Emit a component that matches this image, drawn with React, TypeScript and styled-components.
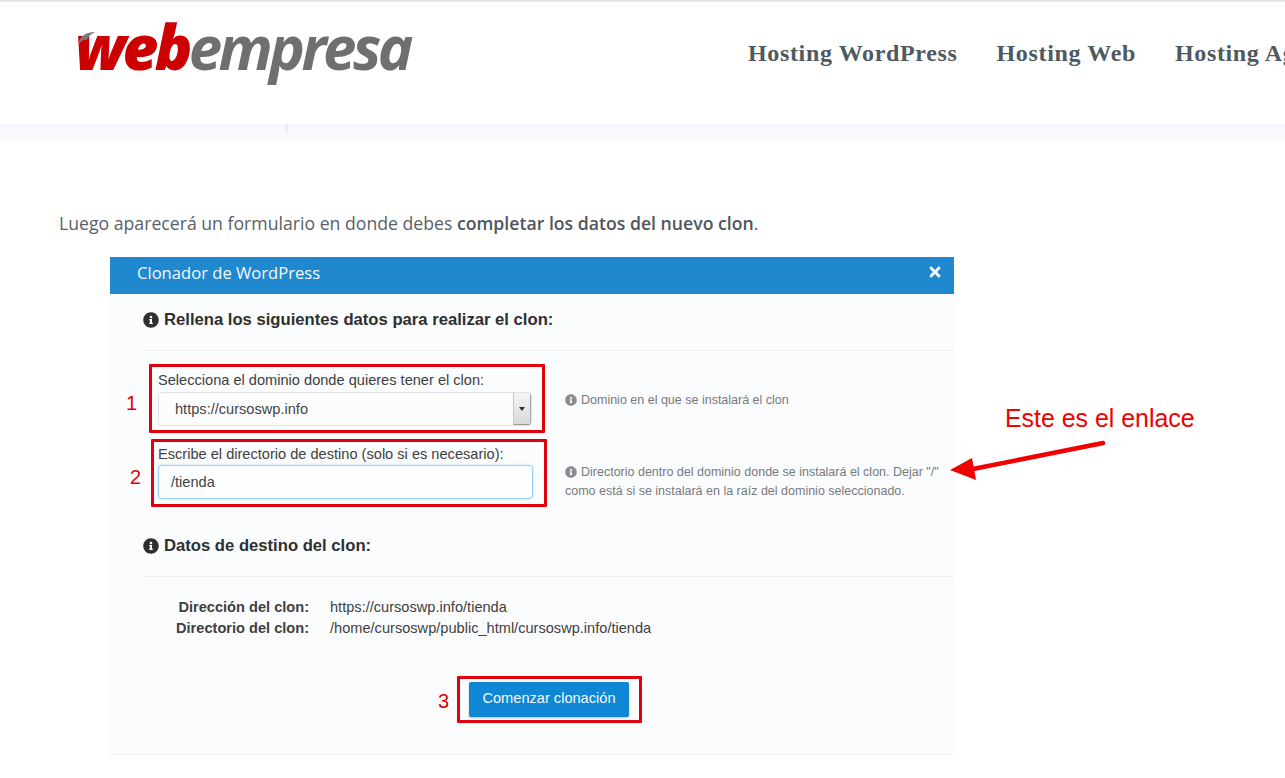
import React from "react";
import styled, { createGlobalStyle } from "styled-components";
import { FaInfoCircle, FaTimes } from "react-icons/fa";

const Global = createGlobalStyle`
  html, body { margin: 0; padding: 0; background: #fff; }
  body { width: 1285px; height: 778px; overflow: hidden; font-family: "Liberation Sans", Arial, sans-serif; }
`;
const Page = styled.div`width: 1285px; height: 778px; overflow: hidden; display: flex; flex-direction: column;`;
const Header = styled.header`
  height: 122px; flex: none; border-top: 2px solid #e6e6e6; display: flex; align-items: flex-start; background: #fff; overflow: hidden;
`;
const Logo = styled.div`
  position: relative; margin: 9px 0 0 75px; width: 345px; flex: none;
  font-family: "Open Sans", sans-serif; font-weight: 800; font-style: italic; font-size: 62px; line-height: 70px; letter-spacing: -3.6px; white-space: nowrap;
`;
const LogoRed = styled.span`color: #cc0000;`;
const LogoGray = styled.span`color: #6f6f6f; font-weight: 700; font-size: 60px; letter-spacing: -3.6px;`;
const Swoosh = styled.svg`position: absolute; left: 3px; top: 20px;`;
const Nav = styled.nav`margin: 33px 0 0 328px; display: flex; gap: 39px; white-space: nowrap;`;
const NavItem = styled.a`
  font-family: "Liberation Serif", serif; font-weight: 700; font-size: 24px; line-height: 36px; color: #4f5a60; letter-spacing: 0.65px;
`;
const Band = styled.div`
  height: 22px; flex: none; background: linear-gradient(#f5f5fd, #fff); padding-left: 286px;
`;
const Tick = styled.div`width: 1px; height: 8px; background: #d8d8dc;`;
const Intro = styled.p`
  margin: 65px 0 0 59px; font-family: "Open Sans", sans-serif; font-size: 17.67px; line-height: 24px; color: #5a6066; white-space: nowrap;
  strong { font-weight: 600; color: #50565c; }
`;
const Stage = styled.div`position: relative; margin: 22px 0 0 110px; width: 844px; flex: none;`;
const Modal = styled.section`background: #fbfcfe; height: 498px; box-sizing: border-box; display: flex; flex-direction: column; border-bottom: 1px solid #f2f3f5;`;
const TitleBar = styled.div`
  height: 37px; flex: none; background: #2088cf; display: flex; justify-content: space-between; align-items: center;
  color: #f2f8fc; padding: 0 11px 7px 27px; box-sizing: border-box; font-family: "Open Sans", sans-serif; font-size: 16.6px;
`;
const Heading = styled.h3<{ $h: number; $top: number; $bottom: number }>`
  margin: 0; height: ${(p) => p.$h}px; padding: ${(p) => p.$top}px 0 ${(p) => p.$bottom}px 33px; display: flex; align-items: center; gap: 5px;
  font-size: 16.65px; font-weight: 700; color: #2f2f2f; box-sizing: border-box;
`;
const Divider = styled.hr`margin: 0 0 0 32px; border: 0; border-top: 1px solid #eef0f2;`;
const FieldRow = styled.div<{ $num: number; $gap: number; $top: number }>`
  display: grid; grid-template-columns: ${(p) => p.$num}px 396px ${(p) => p.$gap}px 1fr; margin-top: ${(p) => p.$top}px;
`;
const Num = styled.div<{ $right: number }>`color: #e00000; font-size: 20px; display: flex; align-items: center; justify-content: flex-end; padding: 9px ${(p) => p.$right}px 0 0;`;
const RedBox = styled.div<{ $h: number; $left: number; $right: number; $top: number }>`
  border: 3px solid #e2000f; box-sizing: border-box; height: ${(p) => p.$h}px; padding: ${(p) => p.$top}px ${(p) => p.$right}px 0 ${(p) => p.$left}px; border-radius: 1px; grid-column: 2;
`;
const Label = styled.label`display: block; font-size: 14.6px; line-height: 17px; color: #3f3f3f; white-space: nowrap;`;
const SelectBox = styled.div`
  margin-top: 3px; height: 34px; border: 1px solid #dfe1e4; border-radius: 4px; background: #fcfcfd; display: flex; align-items: center; justify-content: space-between;
  padding-left: 16px; font-size: 14.6px; color: #444; box-sizing: border-box; overflow: hidden;
`;
const Caret = styled.div`
  width: 18px; height: 34px; background: linear-gradient(#f6f6f6, #d9d9d9); border-left: 1px solid #c8c8c8; border-right: 1px solid #aaa; border-bottom: 2px solid #999; box-sizing: border-box; display: flex; align-items: center; justify-content: center;
  &::after { content: ""; border: 3px solid transparent; border-top: 4px solid #333; margin-top: 4px; }
`;
const TextInput = styled.div`
  margin-top: 2px; height: 34px; border: 1px solid #9dcdf2; border-radius: 4px; background: #fcfdfe; box-shadow: 0 0 3px #bfe0f8; display: flex; align-items: center;
  padding-left: 12px; font-size: 14.6px; color: #444; box-sizing: border-box;
`;
const Help = styled.div<{ $top: number }>`
  grid-column: 4; align-self: center; padding-top: ${(p) => p.$top}px; font-size: 12.5px; line-height: 19px; color: #77797c; width: 378px;
  svg { vertical-align: -2px; margin-right: 4px; color: #8a8c8f; }
`;
const DataGrid = styled.dl`
  margin: 20px 0 0; display: grid; grid-template-columns: 199px 1fr; column-gap: 21px; font-size: 14.6px; line-height: 21px; color: #3f3f3f;
  dt { text-align: right; font-weight: 700; }
  dd { margin: 0; }
`;
const ActionRow = styled.div`display: flex; margin: 37px 0 0 324px; align-items: center;`;
const ActionNum = styled(Num)`padding-top: 4px; width: 23px; box-sizing: border-box;`;
const ActionBox = styled.div`border: 3px solid #e2000f; border-radius: 1px; padding: 3px 9px; width: 185px; height: 47px; box-sizing: border-box;`;
const Button = styled.button`
  display: block; width: 160px; height: 35px; border: 0; border-radius: 2px; background: #0f87d5; color: #f3f9fd; font: 14.6px "Liberation Sans", sans-serif; font-weight: 500; padding: 0 0 3px; box-shadow: 0 1px 2px rgba(0,0,0,.25);
`;
const Callout = styled.div`
  position: absolute; left: 895px; top: 147px; color: #f00000; font-size: 24.9px; line-height: 28px; white-space: nowrap;
`;
const Arrow = styled.svg`position: absolute; left: 838px; top: 180px;`;

export default function App() {
  return (
    <Page>
      <Global />
      <Header>
        <Logo>
          <Swoosh width="18" height="14" viewBox="0 0 18 14"><path d="M1 13C1 6 7 1 17 1C14 3 10 5 9 9C6 8 3 10 1 13Z" fill="#7a7a7a" /></Swoosh>
          <LogoRed>web</LogoRed><LogoGray>empresa</LogoGray>
        </Logo>
        <Nav>
          <NavItem>Hosting WordPress</NavItem>
          <NavItem>Hosting Web</NavItem>
          <NavItem>Hosting Agencias</NavItem>
        </Nav>
      </Header>
      <Band><Tick /></Band>
      <Intro>Luego aparecerá un formulario en donde debes <strong>completar los datos del nuevo clon</strong>.</Intro>
      <Stage>
        <Modal>
          <TitleBar><span>Clonador de WordPress</span><FaTimes size={16} /></TitleBar>
          <Heading $h={56} $top={0} $bottom={5}><FaInfoCircle size={16} />Rellena los siguientes datos para realizar el clon:</Heading>
          <Divider />
          <FieldRow $num={39} $gap={20} $top={13}>
            <Num $right={12}>1</Num>
            <RedBox $h={69} $left={6} $right={10} $top={5}>
              <Label>Selecciona el dominio donde quieres tener el clon:</Label>
              <SelectBox>https://cursoswp.info<Caret /></SelectBox>
            </RedBox>
            <Help $top={4}><FaInfoCircle size={12} />Dominio en el que se instalará el clon</Help>
          </FieldRow>
          <FieldRow $num={41} $gap={18} $top={6}>
            <Num $right={10}>2</Num>
            <RedBox $h={68} $left={4} $right={11} $top={4}>
              <Label>Escribe el directorio de destino (solo si es necesario):</Label>
              <TextInput>/tienda</TextInput>
            </RedBox>
            <Help $top={18}><FaInfoCircle size={12} />Directorio dentro del dominio donde se instalará el clon. Dejar "/" como está si se instalará en la raíz del dominio seleccionado.</Help>
          </FieldRow>
          <Heading $h={69} $top={8} $bottom={0}><FaInfoCircle size={16} />Datos de destino del clon:</Heading>
          <Divider />
          <DataGrid>
            <dt>Dirección del clon:</dt><dd>https://cursoswp.info/tienda</dd>
            <dt>Directorio del clon:</dt><dd>/home/cursoswp/public_html/cursoswp.info/tienda</dd>
          </DataGrid>
          <ActionRow>
            <ActionNum $right={8}>3</ActionNum>
            <ActionBox><Button>Comenzar clonación</Button></ActionBox>
          </ActionRow>
        </Modal>
        <Callout>Este es el enlace</Callout>
        <Arrow width="160" height="48" viewBox="0 0 160 48">
          <path d="M155 6L25 32" stroke="#f00000" strokeWidth="4.5" strokeLinecap="round" fill="none" />
          <path d="M2 33L24 21L28 43Z" fill="#f00000" />
        </Arrow>
      </Stage>
    </Page>
  );
}
